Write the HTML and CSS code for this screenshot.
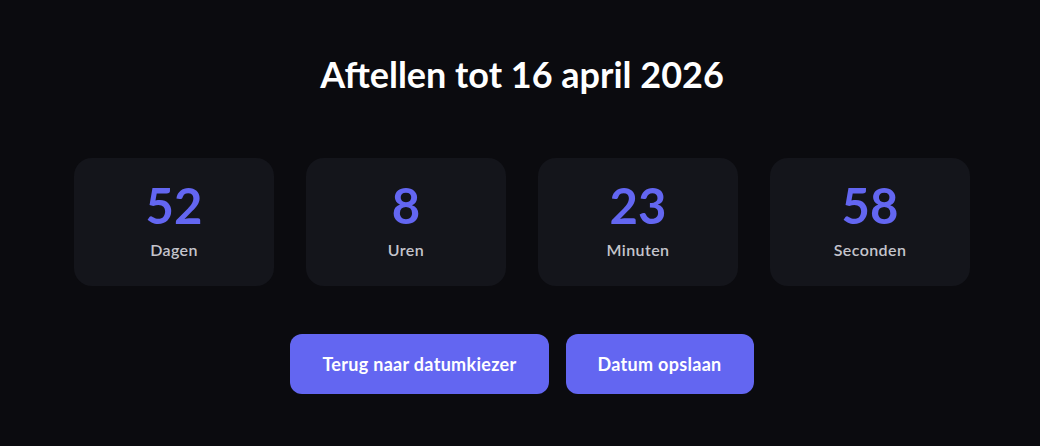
FILE: index.html
```html
<!DOCTYPE html>
<html lang="nl">
<head>
<meta charset="utf-8">
<title>Aftellen</title>
<link rel="stylesheet" href="styles.css">
</head>
<body>
<main class="page">
  <h1 class="title">Aftellen tot 16 april 2026</h1>
  <section class="grid">
    <div class="card"><span class="num">52</span><span class="label">Dagen</span></div>
    <div class="card"><span class="num">8</span><span class="label">Uren</span></div>
    <div class="card"><span class="num">23</span><span class="label">Minuten</span></div>
    <div class="card"><span class="num">58</span><span class="label">Seconden</span></div>
  </section>
  <div class="actions">
    <button class="btn">Terug naar datumkiezer</button>
    <button class="btn">Datum opslaan</button>
  </div>
</main>
</body>
</html>
```
FILE: styles.css
```css
* { box-sizing: border-box; }
html, body { margin: 0; padding: 0; }
body {
  background: #0b0b0f;
  color: #ffffff;
  font-family: "Lato", "Inter", "Liberation Sans", sans-serif;
  width: 1040px;
  height: 446px;
  overflow: hidden;
}
.page {
  display: flex;
  flex-direction: column;
  align-items: center;
  padding: 52px 0 0 4px;
}
.title {
  margin: 0;
  font-size: 36px;
  font-weight: 700;
  line-height: 44px;
}
.grid {
  margin-top: 62px;
  display: grid;
  grid-template-columns: repeat(4, 200px);
  gap: 32px;
}
.card {
  background: #14151b;
  border-radius: 18px;
  height: 128px;
  display: flex;
  flex-direction: column;
  align-items: center;
  padding-top: 20px;
}
.num {
  color: #6366f1;
  font-size: 49px;
  font-weight: 700;
  line-height: 54px;
}
.label {
  margin-top: 7px;
  color: #c4c4cc;
  font-size: 16px;
  font-weight: 600;
  line-height: 22px;
  letter-spacing: 0.4px;
}
.actions {
  margin-top: 48px;
  display: flex;
  gap: 17px;
}
.btn {
  background: #6366f1;
  color: #ffffff;
  border: 0;
  border-radius: 12px;
  height: 60px;
  padding: 0 32px;
  font-family: inherit;
  font-size: 18px;
  font-weight: 700;
  letter-spacing: 0.3px;
}
```
